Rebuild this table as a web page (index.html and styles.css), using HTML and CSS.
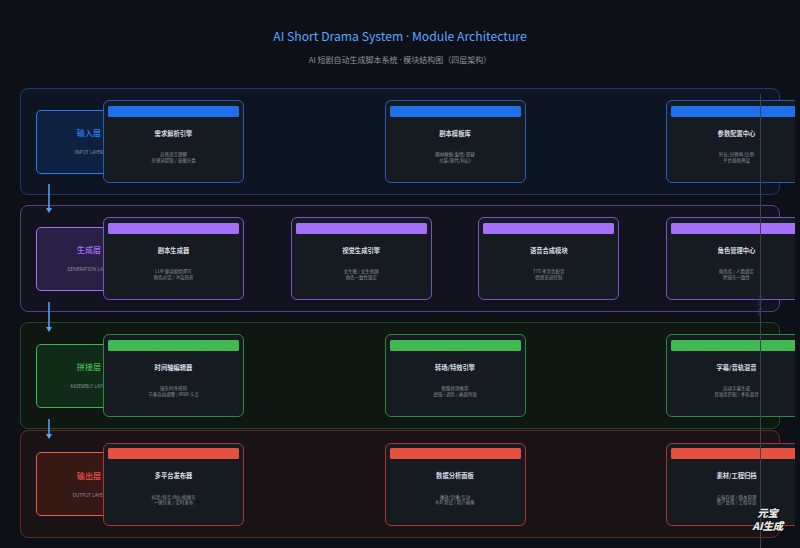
FILE: index.html
```html
<!DOCTYPE html>
<html lang="zh-CN">
<head>
<meta charset="utf-8">
<title>AI Short Drama System · Module Architecture</title>
<link rel="stylesheet" href="styles.css">
</head>
<body>
<div class="page">
  <header class="head">
    <h1 class="title">AI Short Drama System <span class="dot">·</span> Module Architecture</h1>
    <p class="subtitle">AI 短剧自动生成脚本系统 <span class="dot">·</span> 模块结构图（四层架构）</p>
  </header>

  <main class="layers">
    <section class="layer layer-input">
      <div class="layer-label">
        <div class="label-name">输入层</div>
        <div class="label-en">INPUT LAYER</div>
      </div>
      <div class="cards">
        <div class="card"><div class="bar"></div><div class="card-title">需求解析引擎</div><div class="card-desc">自然语言理解<br>关键词提取 / 意图分类</div></div>
        <div class="card"><div class="bar"></div><div class="card-title">剧本模板库</div><div class="card-desc">题材模板(爱情/悬疑<br>古装/现代/科幻)</div></div>
        <div class="card"><div class="bar"></div><div class="card-title">参数配置中心</div><div class="card-desc">时长/分辨率/比例<br>平台规格预设</div></div>
      </div>
    </section>

    <section class="layer layer-gen">
      <div class="layer-label">
        <div class="label-name">生成层</div>
        <div class="label-en">GENERATION LAYER</div>
      </div>
      <div class="cards">
        <div class="card"><div class="bar"></div><div class="card-title">剧本生成器</div><div class="card-desc">LLM 驱动剧情撰写<br>角色对话 / 冲突转折</div></div>
        <div class="card"><div class="bar"></div><div class="card-title">视觉生成引擎</div><div class="card-desc">文生图 / 文生视频<br>角色一致性锁定</div></div>
        <div class="card"><div class="bar"></div><div class="card-title">语音合成模块</div><div class="card-desc">TTS 多音色配音<br>情感语调控制</div></div>
        <div class="card"><div class="bar"></div><div class="card-title">角色管理中心</div><div class="card-desc">角色库 / 人脸绑定<br>跨镜头一致性</div></div>
      </div>
    </section>

    <section class="layer layer-asm">
      <div class="layer-label">
        <div class="label-name">拼接层</div>
        <div class="label-en">ASSEMBLY LAYER</div>
      </div>
      <div class="cards">
        <div class="card"><div class="bar"></div><div class="card-title">时间轴编辑器</div><div class="card-desc">镜头时序排列<br>节奏自动调整 / BGM 卡点</div></div>
        <div class="card"><div class="bar"></div><div class="card-title">转场/特效引擎</div><div class="card-desc">智能转场推荐<br>滤镜 / 调色 / 画面特效</div></div>
        <div class="card"><div class="bar"></div><div class="card-title">字幕/音轨混音</div><div class="card-desc">自动字幕生成<br>音效库匹配 / 多轨混音</div></div>
      </div>
    </section>

    <section class="layer layer-out">
      <div class="layer-label">
        <div class="label-name">输出层</div>
        <div class="label-en">OUTPUT LAYER</div>
      </div>
      <div class="cards">
        <div class="card"><div class="bar"></div><div class="card-title">多平台发布器</div><div class="card-desc">抖音/快手/B站/视频号<br>一键分发 / 定时发布</div></div>
        <div class="card"><div class="bar"></div><div class="card-title">数据分析面板</div><div class="card-desc">播放/完播/互动<br>A/B 测试 / 用户画像</div></div>
        <div class="card"><div class="bar"></div><div class="card-title">素材/工程归档</div><div class="card-desc">云端存储 / 版本管理<br>资产复用 / 工程导出</div></div>
      </div>
    </section>
  </main>

  <svg class="arrow arrow-1" width="8" height="30" viewBox="0 0 8 30"><line x1="4" y1="0" x2="4" y2="25" stroke="#58a6ff" stroke-width="1.5"/><polygon points="1,24 7,24 4,29" fill="#58a6ff"/></svg>
  <svg class="arrow arrow-2" width="8" height="31" viewBox="0 0 8 31"><line x1="4" y1="0" x2="4" y2="26" stroke="#58a6ff" stroke-width="1.5"/><polygon points="1,25 7,25 4,30" fill="#58a6ff"/></svg>
  <svg class="arrow arrow-3" width="8" height="21" viewBox="0 0 8 21"><line x1="4" y1="0" x2="4" y2="16" stroke="#58a6ff" stroke-width="1.5"/><polygon points="1,15 7,15 4,20" fill="#58a6ff"/></svg>

  <div class="flow-line"></div>
  <div class="flow-label">Data Flow</div>

  <div class="watermark"><span class="wm-line">元宝</span><span class="wm-line">AI生成</span></div>
</div>
</body>
</html>
```

FILE: styles.css
```css
* { box-sizing: border-box; }

html, body {
  margin: 0;
  padding: 0;
  background: #0d1117;
}

body {
  font-family: "Noto Sans", "Noto Sans CJK SC", sans-serif;
  color: #c9d1d9;
}

.page {
  position: relative;
  width: 795px;
  height: 548px;
  overflow: hidden;
  background: #0d1117;
}

.head {
  padding-top: 27px;
  text-align: center;
}

.title {
  margin: 0;
  font-family: "Noto Sans CJK SC", "Noto Sans", sans-serif;
  font-weight: 400;
  font-size: 12.2px;
  line-height: 18px;
  color: #58a6ff;
  padding-left: 5px;
}

.dot {
  font-family: "Noto Sans", sans-serif;
}

.subtitle {
  margin: 9px 0 0;
  font-family: "Noto Sans CJK SC", sans-serif;
  font-size: 8px;
  line-height: 10px;
  color: #8b949e;
  padding-left: 5px;
}

.layers {
  display: flex;
  flex-direction: column;
  margin-top: 23px;
  padding-left: 20px;
}

.layer {
  width: 760px;
  height: 107px;
  display: flex;
  align-items: center;
  padding-left: 15px;
  border: 1.5px solid;
  border-radius: 8px;
}

.layer + .layer { margin-top: 10px; }
.layer.layer-out { margin-top: 1px; height: 108px; }

.layer-label {
  flex: none;
  width: 106px;
  height: 64px;
  border: 1.5px solid;
  border-radius: 5px;
  display: flex;
  flex-direction: column;
  align-items: center;
  justify-content: center;
  gap: 11px;
  font-family: "Noto Sans CJK SC", sans-serif;
}

.label-name {
  font-size: 8px;
  line-height: 10px;
  font-weight: 500;
  letter-spacing: 0.2px;
}

.label-en {
  font-family: "Noto Sans", sans-serif;
  font-size: 4.5px;
  line-height: 6px;
  color: #8b949e;
  letter-spacing: 0.1px;
}

.cards {
  flex: none;
  width: 704px;
  margin-left: -39px;
  display: flex;
  justify-content: space-between;
}

.card {
  position: relative;
  z-index: 1;
  width: 141px;
  height: 83px;
  border: 1.5px solid;
  border-radius: 6px;
  background: #161b22;
  padding: 4.5px 4px 0;
  text-align: center;
  font-family: "Noto Sans CJK SC", sans-serif;
}

.bar {
  height: 11px;
  border-radius: 1.5px;
}

.card-title {
  margin-top: 13px;
  font-size: 6.3px;
  line-height: 8px;
  font-weight: 700;
  color: #d6dde4;
}

.card-desc {
  margin-top: 14.5px;
  font-size: 4.5px;
  line-height: 5.7px;
  color: #8b949e;
}

/* layer colour themes */
.layer-input { background: #0d1522; border-color: #183a6c; }
.layer-input .layer-label { background: #0f2140; border-color: #2f7af0; }
.layer-input .label-name { color: #2f81f7; }
.layer-input .card { border-color: #1f5cc0; }
.layer-input .bar { background: #1f6feb; }

.layer-gen { background: #13131f; border-color: #533f88; }
.layer-gen .layer-label { background: #2a1f44; border-color: #a371f7; }
.layer-gen .label-name { color: #a371f7; }
.layer-gen .card { border-color: #7a52c8; }
.layer-gen .bar { background: #a371f7; }

.layer-asm { background: #0f1713; border-color: #1f4d28; }
.layer-asm .layer-label { background: #122b19; border-color: #3fb950; }
.layer-asm .label-name { color: #3fb950; }
.layer-asm .card { border-color: #2a8a3b; }
.layer-asm .bar { background: #3fb950; }

.layer-out { background: #1a1315; border-color: #642a26; }
.layer-out .layer-label { background: #361815; border-color: #f0564b; }
.layer-out .label-name { color: #f85149; }
.layer-out .card { border-color: #a8352f; }
.layer-out .bar { background: #e5503f; }

/* overlays */
.arrow {
  position: absolute;
  left: 45px;
  z-index: 2;
}
.arrow-1 { top: 184px; }
.arrow-2 { top: 302px; }
.arrow-3 { top: 419px; }

.flow-line {
  position: absolute;
  left: 760px;
  top: 94px;
  bottom: 0;
  width: 1px;
  background: #3d434b;
  z-index: 3;
}

.flow-label {
  position: absolute;
  left: 748px;
  top: 303px;
  width: 24px;
  text-align: center;
  font-size: 4.5px;
  line-height: 6px;
  color: #3a4049;
  transform: rotate(90deg);
  z-index: 3;
}

.watermark {
  position: absolute;
  right: 12px;
  bottom: 16px;
  z-index: 4;
  display: flex;
  flex-direction: column;
  align-items: center;
  gap: 1px;
  font-family: "Noto Sans CJK SC", sans-serif;
  font-weight: 900;
  font-style: italic;
  font-size: 10.5px;
  line-height: 12px;
  color: #e9e9e9;
  text-shadow: 0 0 1px #000, 0 0 2px #000;
  letter-spacing: -0.2px;
}

.wm-line {
  display: block;
  height: 12px;
}
```
